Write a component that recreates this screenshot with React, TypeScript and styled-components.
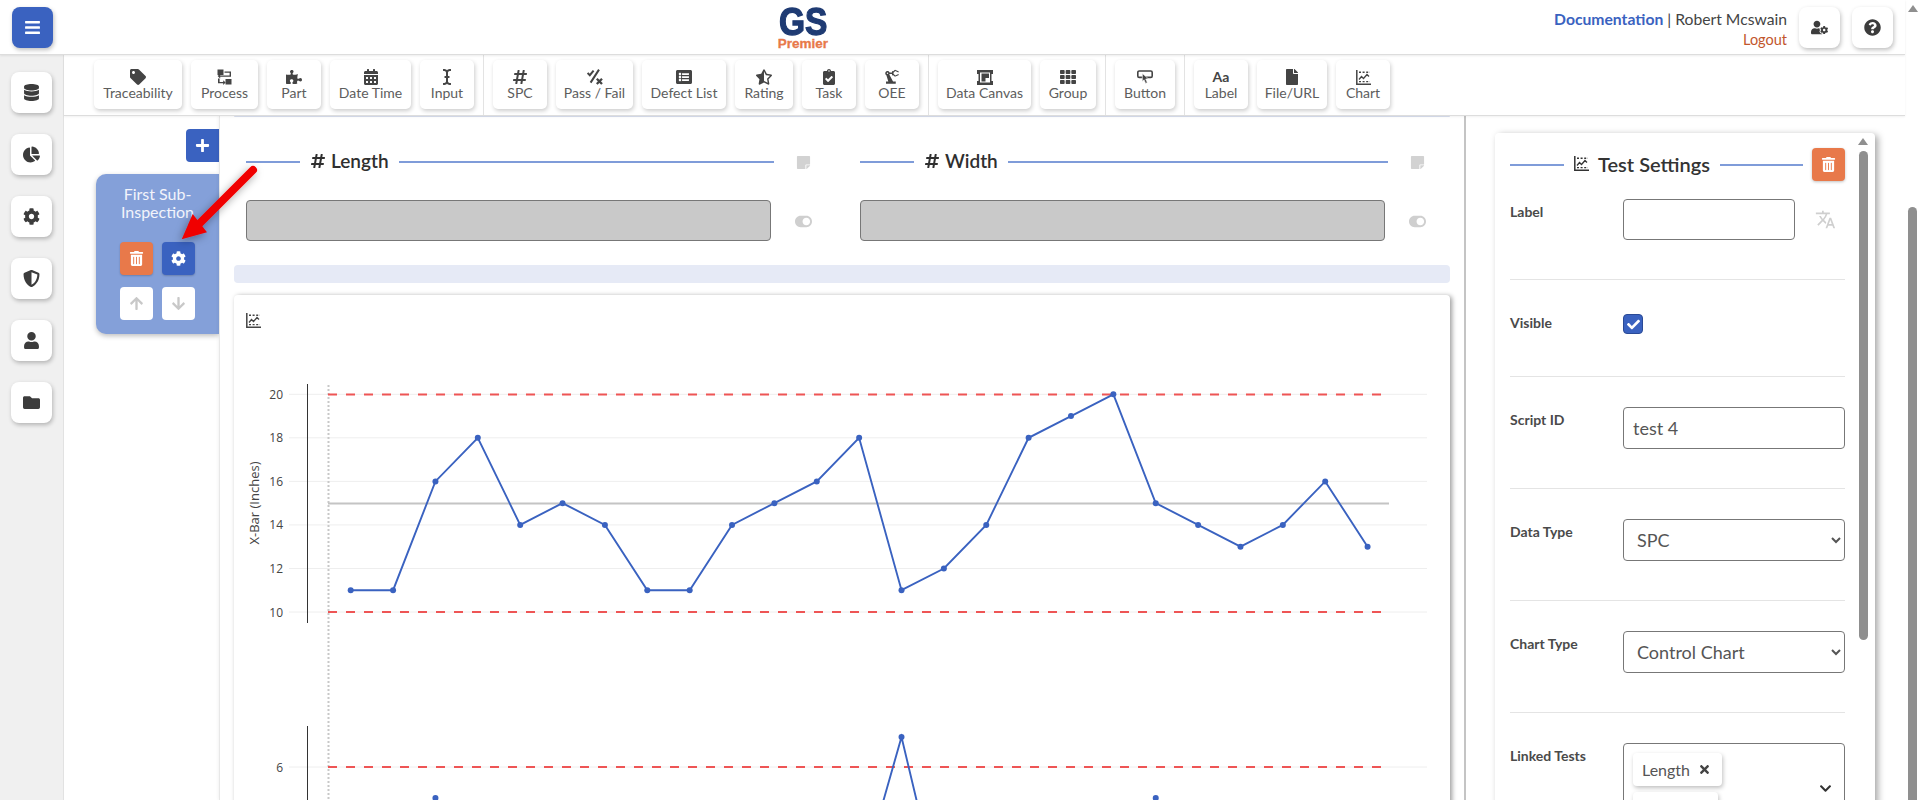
import React from "react";
import styled, { createGlobalStyle } from "styled-components";
import {
  FaBars, FaDatabase, FaChartPie, FaCog, FaShieldAlt, FaUser, FaFolder, FaTag, FaPuzzlePiece,
  FaCalendarAlt, FaICursor, FaHashtag, FaListAlt, FaStarHalfAlt, FaClipboardCheck, FaTh, FaFile,
  FaUserCog, FaQuestionCircle, FaTrashAlt, FaArrowUp, FaArrowDown, FaPlus, FaStickyNote, FaToggleOn,
  FaCheck, FaTimes, FaChevronDown,
} from "react-icons/fa";
import { MdPrecisionManufacturing, MdTranslate } from "react-icons/md";

const BLUE = "#3a62c0";
const ORANGE = "#e8794a";
const LINE = "#7f9cd9";
const FONT = `"Lato", "Liberation Sans", sans-serif`;

const Global = createGlobalStyle`
  html, body { margin: 0; padding: 0; background: #fff; overflow: hidden; }
  body { font-family: ${FONT}; color: #333; }
  * { box-sizing: border-box; }
`;

const Frame = styled.div`display: flex; width: 1920px; height: 800px; overflow: hidden;`;
const Main = styled.div`width: 1905px; display: flex; flex-direction: column; flex: none;`;
const PageScroll = styled.div`width: 15px; display: flex; flex-direction: column; align-items: center; padding-top: 5px; background: #fff;`;
const ArrowUp = styled.div`
  width: 0; height: 0; border-left: 5px solid transparent; border-right: 5px solid transparent;
  border-bottom: 7px solid #8f8f8f; flex: none;
`;
const PageThumb = styled.div`width: 9px; height: 600px; margin-top: 195px; background: #8f8f8f; border-radius: 5px 5px 0 0; flex: none;`;

const Header = styled.header`
  height: 55px; flex: none; display: flex; align-items: center; padding: 0 12px; background: #fff;
  border-bottom: 1px solid #ddd; box-shadow: 0 1px 2px rgba(0,0,0,.08); position: relative; z-index: 3;
`;
const Square = styled.button<{ $blue?: boolean }>`
  width: 41px; height: 41px; border: 0; padding: 0; border-radius: 8px; flex: none;
  display: flex; align-items: center; justify-content: center; font-size: 17px;
  background: ${(p) => (p.$blue ? BLUE : "#fff")}; color: ${(p) => (p.$blue ? "#fff" : "#3c3c3c")};
  box-shadow: 1px 2px 4px rgba(0,0,0,.25);
`;
const Logo = styled.div`
  width: 60px; margin-left: 720px; display: flex; flex-direction: column; align-items: center; flex: none; padding-top: 2px;
`;
const LogoMark = styled.div`
  font: 900 39px/30px "Liberation Sans", sans-serif; color: #1f3b73; -webkit-text-stroke: 1.3px #1f3b73; transform: scaleX(.86);
`;
const LogoSub = styled.div`
  font: 700 13.5px/13px "Liberation Sans", sans-serif; color: ${ORANGE}; -webkit-text-stroke: .3px ${ORANGE};
`;
const HeadRight = styled.div`margin-left: auto; display: flex; align-items: center; gap: 12px;`;
const UserBox = styled.div`display: flex; flex-direction: column; align-items: flex-end; font-size: 15.7px; line-height: 20px; margin-top: 4px;`;
const UserLine = styled.div`color: #444; white-space: nowrap;`;
const DocLink = styled.a`color: ${BLUE}; font-weight: 700;`;
const Logout = styled.a`color: #c2562c; font-size: 14.5px; line-height: 21px;`;

const Body = styled.div`display: flex; flex: 1; min-height: 0;`;
const Sidebar = styled.nav`
  width: 64px; flex: none; background: #f0f0f0; border-right: 1px solid #e2e2e2; display: flex; flex-direction: column;
  align-items: center; padding-top: 17px; gap: 21px; padding-right: 1px;
`;
const Work = styled.div`flex: 1; display: flex; flex-direction: column; min-width: 0;`;
const Toolbar = styled.div`
  height: 61px; flex: none; display: flex; padding-left: 21px; background: #fff; border-bottom: 1px solid #ddd;
  box-shadow: 0 1px 2px rgba(0,0,0,.06); position: relative; z-index: 2;
`;
const ToolGroup = styled.div`
  display: flex; gap: 9px; padding: 5px 9px 0; height: 60px; border-right: 1px solid #e3e3e3;
  &:last-child { border-right: 0; }
`;
const ToolBtn = styled.button<{ $w: number }>`
  width: ${(p) => p.$w}px; height: 49px; padding: 9px 0 0; border: 0; border-radius: 5px; background: #fff;
  box-shadow: 1px 2px 4px rgba(0,0,0,.2); display: flex; flex-direction: column; align-items: center;
  font-family: ${FONT}; font-size: 14px; color: #5d5d5d; line-height: 16px; white-space: nowrap;
`;
const ToolIcon = styled.span`
  height: 16px; display: flex; align-items: center; justify-content: center; color: #444; font-size: 16px; margin-bottom: 0;
`;
const AaGlyph = styled.span`font-size: 14px; font-weight: 700; color: #444;`;

const Content = styled.div`flex: 1; display: flex; min-height: 0; position: relative;`;
const SubCol = styled.div`width: 155px; flex: none; padding-top: 13px; display: flex; flex-direction: column; align-items: flex-end;`;
const AddBtn = styled.button`
  width: 33px; height: 33px; border: 0; background: ${BLUE}; color: #fff; border-radius: 4px 0 0 4px; display: flex;
  align-items: center; justify-content: center; font-size: 15px; padding: 0;
`;
const SubCard = styled.div`
  width: 123px; height: 160px; margin-top: 12px; background: #84a0d9; border-radius: 10px 0 0 10px; box-shadow: 0 2px 5px rgba(0,0,0,.25);
  color: #f2f4fb; padding: 11px 0 0; display: flex; flex-direction: column; align-items: center;
`;
const SubTitle = styled.div`font-size: 16px; line-height: 18px; text-align: center; width: 100px; height: 57px;`;
const SubGrid = styled.div`display: grid; grid-template-columns: 33px 33px; gap: 12px 9px;`;
const SubBtn = styled.button<{ $tone: "orange" | "blue" | "white" }>`
  width: 33px; height: 33px; border: 0; padding: 0; border-radius: 4px; display: flex; align-items: center; justify-content: center; font-size: 15px;
  background: ${(p) => (p.$tone === "orange" ? ORANGE : p.$tone === "blue" ? BLUE : "#fff")};
  color: ${(p) => (p.$tone === "white" ? "#c8c8c8" : "#fff")};
  box-shadow: ${(p) => (p.$tone === "white" ? "none" : "0 1px 2px rgba(0,0,0,.2)")};
`;
const Center = styled.main`
  width: 1247px; flex: none; padding: 0 14px; border-left: 1px solid #e8e8e8; border-right: 2px solid #c4c4c4;
  background: #fff; overflow: hidden; box-shadow: -1px 0 3px rgba(0,0,0,.05);
`;
const TopStrip = styled.div`height: 1px; background: #d9dfef; border-radius: 0 0 4px 4px;`;
const FieldRow = styled.div`display: flex; padding: 36px 0 0 12px;`;
const Field = styled.div`width: 614px; flex: none;`;
const FieldHead = styled.div`display: flex; align-items: center; height: 18px;`;
const FieldRuleLine = styled.div`width: 528px; flex: none; display: flex; align-items: center;`;
const Rule = styled.span<{ $w?: number }>`
  height: 2px; background: ${LINE}; ${(p) => (p.$w ? `width: ${p.$w}px; flex: none;` : "flex: 1;")}
`;
const FieldTitle = styled.h3`
  margin: -2px 10px 0; display: flex; align-items: center; gap: 5px; font: 600 19px/18px ${FONT}; color: #2f2f2f; white-space: nowrap;
`;
const Muted = styled.span`color: #d2d2d2; display: flex; margin-left: 22px; font-size: 15px;`;
const InputRow = styled.div`display: flex; align-items: center; margin-top: 29px;`;
const GreyBox = styled.div`width: 525px; height: 41px; background: #c9c9c9; border: 1px solid #777; border-radius: 4px; flex: none;`;
const ToggleIcon = styled.span`color: #cfcfcf; display: flex; margin: 2px 0 0 24px; font-size: 17px;`;
const Band = styled.div`height: 18px; margin-top: 24px; background: #e6eaf6; border-radius: 4px;`;
const ChartCard = styled.section`
  margin-top: 12px; height: 520px; border-radius: 4px 4px 0 0; background: #fff; padding: 18px 12px 0;
  box-shadow: 2px 1px 5px rgba(0,0,0,.4); color: #444;
`;
const ChartHead = styled.div`height: 27px; display: flex; align-items: flex-start;`;
const ChartSvg = styled.svg`display: block; margin-left: -12px; width: 1216px; height: 460px;`;
const Tick = styled.text`font: 400 12px "Open Sans", sans-serif; fill: #444;`;
const AxisTitle = styled.text`font: 400 13px "Open Sans", sans-serif; fill: #444;`;

const Right = styled.aside`flex: 1; padding: 17px 0 0 29px; background: #fff; min-width: 0;`;
const SetCard = styled.div`
  width: 380px; height: 700px; background: #fff; border-radius: 4px 4px 0 0; box-shadow: 3px 2px 7px rgba(0,0,0,.35); display: flex;
`;
const SetBody = styled.div`width: 350px; flex: none; padding: 15px 0 0 15px;`;
const SetScroll = styled.div`width: 27px; flex: none; display: flex; flex-direction: column; align-items: center; padding: 5px 0 0 9px;`;
const SetThumb = styled.div`width: 9px; height: 489px; margin-top: 6px; background: #8f8f8f; border-radius: 5px; flex: none;`;
const SetHead = styled.div`display: flex; align-items: center; height: 33px;`;
const SetTitle = styled.h2`
  margin: -2px 10px 0; display: flex; align-items: center; gap: 9px; font: 600 20px/22px ${FONT}; color: #333; white-space: nowrap;
`;
const Trash = styled.button`
  width: 33px; height: 33px; border: 0; padding: 0; margin-left: 9px; border-radius: 4px; background: ${ORANGE}; color: #fff; display: flex;
  align-items: center; justify-content: center; font-size: 15px; box-shadow: 0 1px 3px rgba(0,0,0,.25); flex: none;
`;
const SetRow = styled.div<{ $pt?: number; $pb?: number; $last?: boolean }>`
  display: grid; grid-template-columns: 113px 1fr; padding: ${(p) => p.$pt ?? 30}px 0 ${(p) => p.$pb ?? 39}px;
  border-bottom: ${(p) => (p.$last ? "0" : "1px solid #e4e4e4")};
`;
const SetLabel = styled.label<{ $top?: number }>`
  font: 700 14px/16px ${FONT}; color: #4a4a4a; padding-top: ${(p) => p.$top ?? 5}px;
`;
const Line = styled.div`display: flex; align-items: center;`;
const TextInput = styled.input<{ $w?: number }>`
  width: ${(p) => p.$w ?? 222}px; height: ${(p) => (p.$w ? 41 : 42)}px; border: 1px solid #777; border-radius: 4px; background: #fff;
  padding: 0 9px; font: 400 18px ${FONT}; color: #555; outline: 0;
`;
const Translate = styled.span`color: #cfcfcf; font-size: 21px; display: flex; margin-left: 20px;`;
const Check = styled.span`
  width: 20px; height: 20px; border-radius: 4px; background: ${BLUE}; border: 1px solid #2a4a96; color: #fff; display: flex; align-items: center;
  justify-content: center; font-size: 13px;
`;
const Select = styled.select`
  width: 222px; height: 42px; border: 1px solid #777; border-radius: 4px; background: #fff; padding: 0 9px; font: 400 18px ${FONT}; color: #555; outline: 0;
`;
const MultiBox = styled.div`
  width: 222px; height: 90px; border: 1px solid #777; border-radius: 4px; padding: 9px; display: flex; align-items: center; justify-content: space-between; background: #fff;
`;
const Tags = styled.div`display: flex; flex-direction: column; align-items: flex-start; gap: 6px; align-self: flex-start;`;
const TagChip = styled.span`
  height: 33px; display: flex; align-items: center; gap: 8px; padding: 0 11px 0 9px; background: #fff; border-radius: 4px; box-shadow: 1px 2px 4px rgba(0,0,0,.25);
  font-size: 16px; color: #555; white-space: nowrap;
`;
const TagX = styled.span`display: flex; color: #444; font-size: 13px;`;
const Chevron = styled.span`display: flex; color: #333; font-size: 13px; margin-right: 3px;`;

const PointerArrow = styled.svg`position: absolute; left: 112px; top: 50px; width: 80px; height: 80px; z-index: 4; overflow: visible;`;

const ProcessIcon = () => (
  <svg width="15" height="16" viewBox="0 0 15 16" fill="currentColor">
    <rect x="0.5" y="0.5" width="6" height="5.5" /><rect x="8.5" y="10" width="6" height="5.5" />
    <path d="M7.5 2.4h6.5v5.4H3.2v1.6L.6 7.1l2.6-2.4v1.7h9.4V3.8H7.5zM1 9.4h1.6v3.5h3.6v-1.6l2.4 2.3-2.4 2.3v-1.6H1z" />
  </svg>
);
const PassFailIcon = () => (
  <svg width="16" height="16" viewBox="0 0 16 16" fill="none" stroke="currentColor" strokeWidth="2">
    <path d="M.6 4l2.2 2.2L6.6 1.6M12 .6 3.6 13.6" /><path d="M9.8 9.8l5.2 5.2M15 9.8L9.8 15" strokeWidth="2.3" />
  </svg>
);
const CanvasIcon = () => (
  <svg width="16" height="15" viewBox="0 0 16 15" fill="currentColor">
    <path fillRule="evenodd" d="M0 0h16v4h-1.5v7H16v4H0v-4h1.5V4H0zM3 2.5V12.5H13V2.5z" />
    <path d="M4.5 3.5h7.5v4.5H8.5v3.5H4.5z" />
  </svg>
);
const ButtonIcon = () => (
  <svg width="16" height="15" viewBox="0 0 16 15">
    <rect x="0.8" y="1" width="14.4" height="6.4" rx="1.4" fill="none" stroke="currentColor" strokeWidth="1.6" />
    <path d="M5.4 3.6l6 5.2-2.7.2 1.6 3.6-1.7.8-1.6-3.6-1.7 1.8z" fill="currentColor" stroke="#fff" strokeWidth=".6" />
  </svg>
);
const ChartIcon = () => (
  <svg width="15" height="15" viewBox="0 0 15 15" fill="none" stroke="currentColor">
    <path d="M.8 0v14.2H15" strokeWidth="1.5" />
    <path d="M3 9.5l2.5-3 2 2 3.5-4 2 2" strokeWidth="1.3" />
    <path d="M3 2.2h11M3 11.6h11" strokeWidth="1.4" strokeDasharray="2 1.6" />
  </svg>
);

type Tool = { label: string; w: number; icon: React.ReactNode };
const toolGroups: Tool[][] = [
  [
    { label: "Traceability", w: 88, icon: <FaTag /> },
    { label: "Process", w: 67, icon: <ProcessIcon /> },
    { label: "Part", w: 54, icon: <FaPuzzlePiece /> },
    { label: "Date Time", w: 81, icon: <FaCalendarAlt /> },
    { label: "Input", w: 54, icon: <FaICursor /> },
  ],
  [
    { label: "SPC", w: 54, icon: <FaHashtag /> },
    { label: "Pass / Fail", w: 77, icon: <PassFailIcon /> },
    { label: "Defect List", w: 84, icon: <FaListAlt /> },
    { label: "Rating", w: 58, icon: <FaStarHalfAlt /> },
    { label: "Task", w: 54, icon: <FaClipboardCheck /> },
    { label: "OEE", w: 54, icon: <MdPrecisionManufacturing size={18} /> },
  ],
  [
    { label: "Data Canvas", w: 93, icon: <CanvasIcon /> },
    { label: "Group", w: 56, icon: <FaTh /> },
  ],
  [{ label: "Button", w: 60, icon: <ButtonIcon /> }],
  [
    { label: "Label", w: 54, icon: <AaGlyph>Aa</AaGlyph> },
    { label: "File/URL", w: 70, icon: <FaFile /> },
    { label: "Chart", w: 54, icon: <ChartIcon /> },
  ],
];

const sideIcons = [FaDatabase, FaChartPie, FaCog, FaShieldAlt, FaUser, FaFolder];
const values = [11, 11, 16, 18, 14, 15, 14, 11, 11, 14, 15, 16, 18, 11, 12, 14, 18, 19, 20, 15, 14, 13, 14, 16, 13];
const xOf = (i: number) => 350.7 + i * 42.37;
const yOf = (v: number) => 612 - (v - 10) * 21.77;
const topDots: [number, number][] = [[2, 798], [13, 737], [19, 798]];

const Plot = () => {
  const pts = values.map((v, i) => `${xOf(i).toFixed(1)},${yOf(v).toFixed(1)}`).join(" ");
  return (
    <ChartSvg viewBox="234 340 1216 460">
      {[20, 18, 16, 14, 12, 10].map((v) => (
        <g key={v}>
          <line x1="289" x2="1427" y1={yOf(v)} y2={yOf(v)} stroke="#eee" strokeWidth="1" />
          <Tick x="283" y={yOf(v) + 4.5} textAnchor="end">{v}</Tick>
        </g>
      ))}
      <line x1="289" x2="1427" y1="767" y2="767" stroke="#eee" />
      <Tick x="283" y="771.5" textAnchor="end">6</Tick>
      <line x1="307.5" x2="307.5" y1="384" y2="623" stroke="#333" />
      <line x1="307.5" x2="307.5" y1="726" y2="800" stroke="#333" />
      <line x1="328.5" x2="328.5" y1="385" y2="800" stroke="#c8c8c8" strokeWidth="2" strokeDasharray="2 2" />
      <line x1="328" x2="1389" y1={503.5} y2={503.5} stroke="#c4c4c4" strokeWidth="2" />
      {[394.5, 612, 767].map((y) => (
        <line key={y} x1="328" x2="1383" y1={y} y2={y} stroke="#ee5555" strokeWidth="2" strokeDasharray="9 9" />
      ))}
      <AxisTitle x="259" y="503" textAnchor="middle" transform="rotate(-90 259 503)">X-Bar (Inches)</AxisTitle>
      <polyline points={pts} fill="none" stroke={BLUE} strokeWidth="1.9" />
      {values.map((v, i) => <circle key={i} cx={xOf(i)} cy={yOf(v)} r="3" fill={BLUE} />)}
      <polyline points={`${xOf(12)},886 ${xOf(13)},737 ${xOf(14)},915`} fill="none" stroke={BLUE} strokeWidth="1.9" />
      {topDots.map(([i, y]) => <circle key={i} cx={xOf(i)} cy={y} r="3" fill={BLUE} />)}
    </ChartSvg>
  );
};

export default function App() {
  return (
    <Frame>
      <Global />
      <Main>
        <Header>
          <Square $blue><FaBars /></Square>
          <Logo>
            <LogoMark>GS</LogoMark>
            <LogoSub>Premier</LogoSub>
          </Logo>
          <HeadRight>
            <UserBox>
              <UserLine><DocLink>Documentation</DocLink> | Robert Mcswain</UserLine>
              <Logout>Logout</Logout>
            </UserBox>
            <Square><FaUserCog /></Square>
            <Square><FaQuestionCircle /></Square>
          </HeadRight>
        </Header>
        <Body>
          <Sidebar>
            {sideIcons.map((Icon, i) => <Square key={i}><Icon /></Square>)}
          </Sidebar>
          <Work>
            <Toolbar>
              {toolGroups.map((group, i) => (
                <ToolGroup key={i}>
                  {group.map((t) => (
                    <ToolBtn key={t.label} $w={t.w}>
                      <ToolIcon>{t.icon}</ToolIcon>
                      {t.label}
                    </ToolBtn>
                  ))}
                </ToolGroup>
              ))}
            </Toolbar>
            <Content>
              <SubCol>
                <AddBtn><FaPlus /></AddBtn>
                <SubCard>
                  <SubTitle>First Sub-Inspection</SubTitle>
                  <SubGrid>
                    <SubBtn $tone="orange"><FaTrashAlt /></SubBtn>
                    <SubBtn $tone="blue"><FaCog /></SubBtn>
                    <SubBtn $tone="white"><FaArrowUp /></SubBtn>
                    <SubBtn $tone="white"><FaArrowDown /></SubBtn>
                  </SubGrid>
                </SubCard>
              </SubCol>
              <Center>
                <TopStrip />
                <FieldRow>
                  {["Length", "Width"].map((name) => (
                    <Field key={name}>
                      <FieldHead>
                        <FieldRuleLine>
                          <Rule $w={54} />
                          <FieldTitle><FaHashtag size={16} />{name}</FieldTitle>
                          <Rule />
                        </FieldRuleLine>
                        <Muted><FaStickyNote /></Muted>
                      </FieldHead>
                      <InputRow>
                        <GreyBox />
                        <ToggleIcon><FaToggleOn /></ToggleIcon>
                      </InputRow>
                    </Field>
                  ))}
                </FieldRow>
                <Band />
                <ChartCard>
                  <ChartHead><ChartIcon /></ChartHead>
                  <Plot />
                </ChartCard>
              </Center>
              <Right>
                <SetCard>
                  <SetBody>
                    <SetHead>
                      <Rule $w={54} />
                      <SetTitle><ChartIcon />Test Settings</SetTitle>
                      <Rule />
                      <Trash><FaTrashAlt /></Trash>
                    </SetHead>
                    <SetRow $pt={18}>
                      <SetLabel>Label</SetLabel>
                      <Line><TextInput $w={172} defaultValue="" /><Translate><MdTranslate /></Translate></Line>
                    </SetRow>
                    <SetRow $pt={34} $pb={42}>
                      <SetLabel $top={1}>Visible</SetLabel>
                      <Line><Check><FaCheck /></Check></Line>
                    </SetRow>
                    <SetRow>
                      <SetLabel>Script ID</SetLabel>
                      <TextInput defaultValue="test 4" />
                    </SetRow>
                    <SetRow>
                      <SetLabel>Data Type</SetLabel>
                      <Select defaultValue="SPC"><option>SPC</option></Select>
                    </SetRow>
                    <SetRow>
                      <SetLabel>Chart Type</SetLabel>
                      <Select defaultValue="Control Chart"><option>Control Chart</option></Select>
                    </SetRow>
                    <SetRow $last>
                      <SetLabel>Linked Tests</SetLabel>
                      <MultiBox>
                        <Tags>
                          <TagChip>Length<TagX><FaTimes /></TagX></TagChip>
                          <TagChip>Width<TagX><FaTimes /></TagX></TagChip>
                        </Tags>
                        <Chevron><FaChevronDown /></Chevron>
                      </MultiBox>
                    </SetRow>
                  </SetBody>
                  <SetScroll>
                    <ArrowUp />
                    <SetThumb />
                  </SetScroll>
                </SetCard>
              </Right>
              <PointerArrow viewBox="0 0 80 80">
                <defs>
                  <filter id="arrowShadow" x="-30%" y="-30%" width="160%" height="160%">
                    <feDropShadow dx="-2" dy="3" stdDeviation="4" floodColor="#000" floodOpacity=".35" />
                  </filter>
                </defs>
                <g filter="url(#arrowShadow)">
                  <path d="M77 4 L23 58" stroke="#f00000" strokeWidth="8" strokeLinecap="round" fill="none" />
                  <path d="M5.7 73.3 L16.7 48 L31 66.3 Z" fill="#f00000" />
                </g>
              </PointerArrow>
            </Content>
          </Work>
        </Body>
      </Main>
      <PageScroll>
        <ArrowUp />
        <PageThumb />
      </PageScroll>
    </Frame>
  );
}
